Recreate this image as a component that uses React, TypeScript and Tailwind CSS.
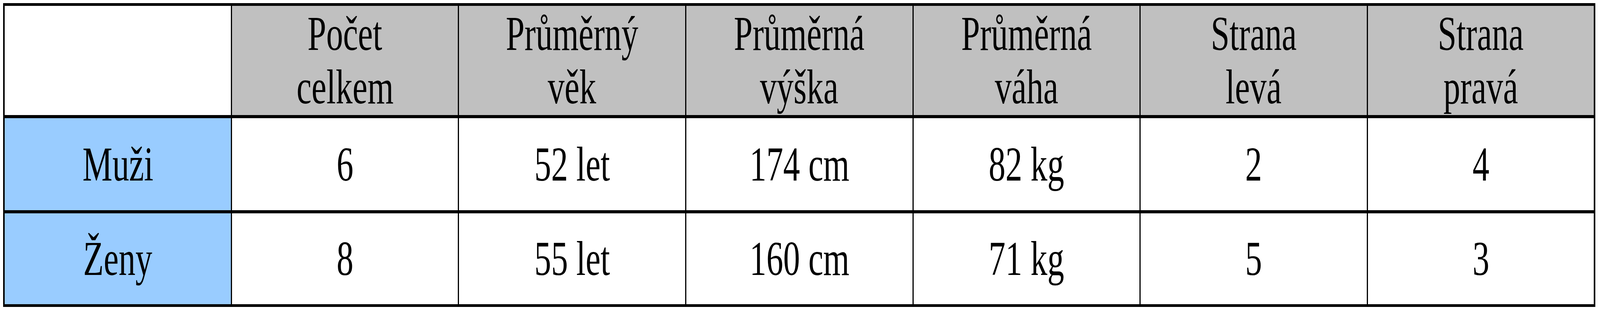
import React, { useEffect, useState } from "react";

const headers: [string, string][] = [
  ["Počet", "celkem"],
  ["Průměrný", "věk"],
  ["Průměrná", "výška"],
  ["Průměrná", "váha"],
  ["Strana", "levá"],
  ["Strana", "pravá"],
];

const rows: { label: string; values: string[] }[] = [
  { label: "Muži", values: ["6", "52 let", "174 cm", "82 kg", "2", "4"] },
  { label: "Ženy", values: ["8", "55 let", "160 cm", "71 kg", "5", "3"] },
];

function Cell({ bg, lines, sx }: { bg: string; lines: string[]; sx: number }) {
  return (
    <div className={`${bg} flex flex-col items-center justify-center text-center whitespace-nowrap`}>
      {lines.map((l) => (
        <span key={l} style={{ transform: `scaleX(${sx})` }}>
          {l}
        </span>
      ))}
    </div>
  );
}

export default function App() {
  const [sx, setSx] = useState(1);
  useEffect(() => {
    const f = () => setSx(Math.min(1, window.innerWidth / 5955));
    f();
    window.addEventListener("resize", f);
    return () => window.removeEventListener("resize", f);
  }, []);
  return (
    <div className="w-full h-[800px] bg-white overflow-hidden pt-[8px]">
      <div className="ml-[0.2015%] w-[99.513%] bg-black pt-[7px] pb-[7px] pl-[0.1%] pr-[0.1%] grid grid-cols-7 grid-rows-[280px_236px_233px] gap-x-[3px] gap-y-[8px] font-['Liberation_Serif','Times_New_Roman',serif] text-[125px] leading-[137px] text-black">
        <div className="bg-white" />
        {headers.map(([a, b]) => (
          <Cell key={a + b} bg="bg-[#c0c0c0]" lines={[a, b]} sx={sx} />
        ))}
        {rows.map((r) => (
          <React.Fragment key={r.label}>
            <Cell bg="bg-[#99ccff]" lines={[r.label]} sx={sx} />
            {r.values.map((v, i) => (
              <Cell key={i} bg="bg-white" lines={[v]} sx={sx} />
            ))}
          </React.Fragment>
        ))}
      </div>
    </div>
  );
}
